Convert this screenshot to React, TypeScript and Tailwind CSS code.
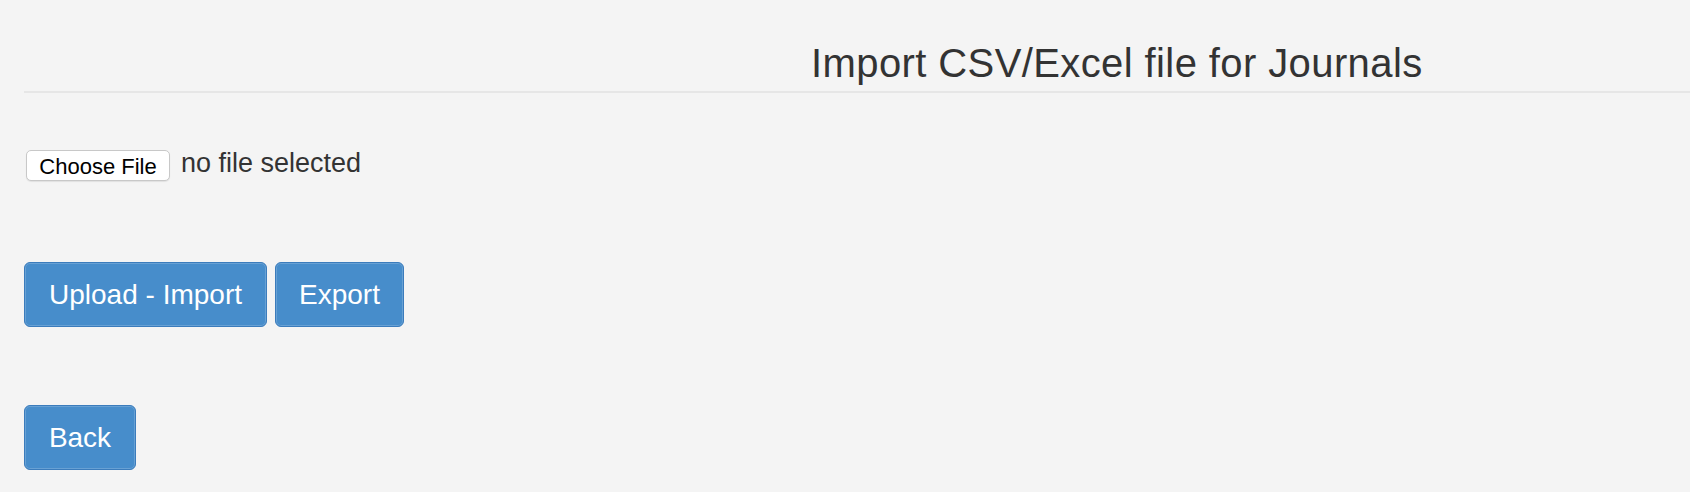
const App = () => {
  return (
    <div className="min-h-screen bg-[#f4f4f4] pl-[24px] font-['Liberation_Sans',Arial,sans-serif] text-[#333]">
      {/* header */}
      <div className="border-b-2 border-[#e6e6e6] pt-[39px] pb-[4px] pl-[787px]">
        <h1 className="whitespace-nowrap text-[40px] leading-[48px] font-normal tracking-[0.4px]">
          Import CSV/Excel file for Journals
        </h1>
      </div>

      {/* file input */}
      <div className="mt-[54px] flex items-start gap-x-[11px]">
        <button className="mt-[3px] ml-[2px] h-[31px] w-[144px] rounded-[5px] border border-[#c8c8c8] bg-white pt-[1px] text-[22px] leading-[27px] text-black shadow-[0_1px_1px_rgba(0,0,0,0.08)]">
          Choose File
        </button>
        <span className="text-[27px] leading-[32px]">no file selected</span>
      </div>

      {/* actions */}
      <div className="mt-[81px] flex gap-x-[8px]">
        <button className="h-[65px] w-[243px] rounded-[6px] border border-[#3b7cbc] bg-[#478dcb] text-[28px] leading-[32px] text-white shadow-[inset_0_0_0_1px_rgba(255,255,255,0.18)]">
          Upload - Import
        </button>
        <button className="h-[65px] w-[129px] rounded-[6px] border border-[#3b7cbc] bg-[#478dcb] text-[28px] leading-[32px] text-white shadow-[inset_0_0_0_1px_rgba(255,255,255,0.18)]">
          Export
        </button>
      </div>

      <div className="mt-[78px]">
        <button className="h-[65px] w-[112px] rounded-[6px] border border-[#3b7cbc] bg-[#478dcb] text-[28px] leading-[32px] text-white shadow-[inset_0_0_0_1px_rgba(255,255,255,0.18)]">
          Back
        </button>
      </div>
    </div>
  );
};

export default App;
